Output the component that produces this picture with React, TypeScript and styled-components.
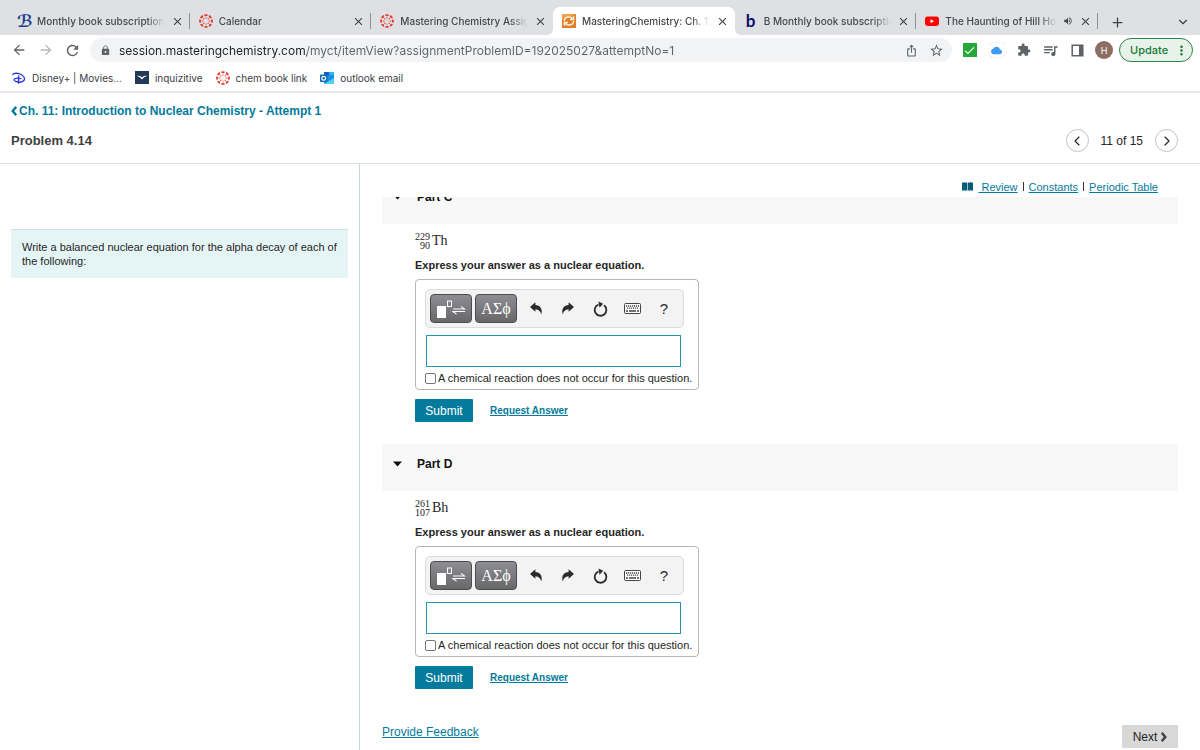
import React from "react";
import styled, { createGlobalStyle, css } from "styled-components";
import {
  MdArrowBack,
  MdArrowForward,
  MdCheck,
  MdClose,
  MdCloud,
  MdExtension,
  MdIosShare,
  MdLock,
  MdMoreVert,
  MdQueueMusic,
  MdRefresh,
  MdStarBorder,
  MdVolumeUp,
} from "react-icons/md";
import { ChevronDown, ChevronLeft, ChevronRight, Plus } from "lucide-react";

const UI_FONT = '"Inter", "Roboto", sans-serif';
const PAGE_FONT = '"Liberation Sans", Arial, sans-serif';
const MATH_FONT = '"Liberation Serif", "DejaVu Serif", serif';
const TEAL = "#047a9c";

const GlobalStyle = createGlobalStyle`
  *, *::before, *::after { box-sizing: border-box; }
  body { margin: 0; background: #fff; font-family: ${PAGE_FONT}; color: #252525; }
  button, input { font: inherit; color: inherit; }
  button { border: 0; padding: 0; background: none; cursor: pointer; }
  a { color: ${TEAL}; }
  svg { display: block; flex: none; }
  h1, h2, h3, p { margin: 0; }
`;

const Window = styled.div`
  display: flex;
  flex-direction: column;
  height: 100vh;
  overflow: hidden;
`;

/* ---------- browser chrome ---------- */

const TabStrip = styled.div`
  display: flex;
  align-items: flex-end;
  height: 35px;
  padding-left: 8px;
  background: #dee0e4;
  font-family: ${UI_FONT};
  flex: none;
`;

const Tab = styled.div<{ $active?: boolean; $divider?: boolean }>`
  position: relative;
  display: flex;
  flex: 1 1 0;
  align-items: center;
  gap: 6px;
  min-width: 0;
  height: 28px;
  padding: 0 7px 0 9px;
  font-size: 10px;
  font-weight: 500;
  color: #45484c;

  ${(p) =>
    p.$divider &&
    css`
      &::after {
        content: "";
        position: absolute;
        right: 0;
        top: 6px;
        width: 1px;
        height: 16px;
        background: #8d9094;
      }
    `}

  ${(p) =>
    p.$active &&
    css`
      background: #fff;
      border-radius: 7px 7px 0 0;
      &::before,
      &::after {
        content: "";
        position: absolute;
        bottom: 0;
        width: 6px;
        height: 6px;
      }
      &::before {
        right: 100%;
        background: radial-gradient(circle at 0 0, transparent 6px, #fff 6px);
      }
      &::after {
        left: 100%;
        background: radial-gradient(circle at 100% 0, transparent 6px, #fff 6px);
      }
    `}
`;

const TabTitle = styled.span`
  flex: 1;
  min-width: 0;
  overflow: hidden;
  white-space: nowrap;
  mask-image: linear-gradient(to right, #000 calc(100% - 18px), transparent);
`;

const TabClose = styled.button`
  display: grid;
  place-items: center;
  width: 12px;
  height: 12px;
  flex: none;
  color: #3c4043;
`;

const TabStripEnd = styled.div`
  display: flex;
  align-items: center;
  justify-content: space-between;
  width: 102px;
  height: 28px;
  padding: 0 12px;
  color: #3c4043;
  flex: none;
`;

const Glyph = styled.span<{ $color: string; $font: string }>`
  width: 14px;
  flex: none;
  font: bold 17px/20px ${(p) => p.$font};
  text-align: center;
  color: ${(p) => p.$color};
`;

const Toolbar = styled.div`
  display: flex;
  align-items: center;
  height: 30px;
  padding: 0 7px 0 10px;
  gap: 9px;
  color: #5f6368;
  font-family: ${UI_FONT};
  flex: none;
`;

const ToolGroup = styled.div`
  display: flex;
  align-items: center;
  gap: 10px;
`;

const ProfileGroup = styled.div`
  display: flex;
  align-items: center;
  gap: 6px;
`;

const ToolButton = styled.button<{ $faded?: boolean }>`
  display: grid;
  place-items: center;
  width: 17px;
  height: 20px;
  flex: none;
  color: ${(p) => (p.$faded ? "#b5b7ba" : "#5f6368")};
`;

const AddressBar = styled.div`
  display: flex;
  flex: 1;
  align-items: center;
  gap: 8px;
  height: 24px;
  padding: 0 7px 0 10px;
  border-radius: 12px;
  background: #f1f3f4;
`;

const AddressInput = styled.input`
  flex: 1;
  min-width: 0;
  padding: 0;
  border: 0;
  outline: 0;
  font-size: 12px;
  color: transparent;
  background: linear-gradient(to right, #202124 188px, #5f6368 188px);
  background-clip: text;
`;

const CheckBadge = styled.span`
  display: grid;
  place-items: center;
  width: 14px;
  height: 14px;
  color: #fff;
  background: #27a83a;
  stroke-width: 2px;
`;

const CloudBadge = styled.span`
  display: grid;
  place-items: center;
  width: 14px;
  height: 14px;
  border-radius: 2px;
  color: #3b9af5;
  background: #fff;
  box-shadow: 0 0 1px #aaa;
`;

const Avatar = styled.button`
  width: 18px;
  height: 18px;
  border-radius: 50%;
  background: #8d6e63;
  color: #fff;
  font-size: 9px;
  flex: none;
`;

const UpdateButton = styled.button`
  display: flex;
  align-items: center;
  justify-content: space-between;
  width: 74px;
  height: 24px;
  padding: 0 3px 0 10px;
  border: 1px solid #2a8549;
  border-radius: 12px;
  background: #e8f2ea;
  color: #1a7a38;
  font-size: 11px;
  font-weight: 500;
  flex: none;
`;

const Bookmarks = styled.nav`
  display: flex;
  align-items: center;
  gap: 13px;
  height: 28px;
  padding: 0 12px;
  border-bottom: 2px solid #e6e7e9;
  font-family: ${UI_FONT};
  flex: none;
`;

const Bookmark = styled.a`
  display: flex;
  align-items: center;
  gap: 6px;
  font-size: 10px;
  color: #3c4043;
  text-decoration: none;
  white-space: nowrap;
`;

/* ---------- assignment page ---------- */

const PageHeader = styled.header`
  display: flex;
  align-items: flex-end;
  justify-content: space-between;
  height: 71px;
  padding: 0 22px 11px 11px;
  border-bottom: 1px solid #dcdfe2;
  flex: none;
`;

const HeaderTitles = styled.div`
  display: flex;
  flex-direction: column;
  gap: 14px;
  padding-bottom: 3px;
`;

const BackLink = styled.a`
  display: flex;
  align-items: center;
  gap: 2px;
  font-size: 12px;
  line-height: 16px;
  font-weight: bold;
  text-decoration: none;
`;

const ProblemTitle = styled.h1`
  font-size: 13px;
  line-height: 16px;
  color: #404040;
`;

const Pager = styled.div`
  display: flex;
  align-items: center;
  gap: 12px;
  font-size: 12px;
`;

const PagerButton = styled.button`
  display: grid;
  place-items: center;
  width: 23px;
  height: 23px;
  border: 1px solid #c2c2c2;
  border-radius: 50%;
`;

const Columns = styled.div`
  display: flex;
  flex: 1;
  min-height: 0;
`;

const PromptColumn = styled.aside`
  width: 30%;
  padding: 65px 11px 0;
  border-right: 1px solid #c9d5de;
`;

const Prompt = styled.p`
  padding: 10px 11px;
  border-top: 1px solid #d5dfe0;
  background: #e5f5f6;
  font-size: 11px;
  line-height: 14px;
`;

const WorkColumn = styled.main`
  display: flex;
  flex-direction: column;
  flex: 1;
  min-width: 0;
  padding: 0 22px;
`;

const ResourceLinks = styled.nav`
  display: flex;
  align-items: center;
  justify-content: flex-end;
  gap: 5px;
  height: 33px;
  padding: 12px 20px 0 0;
  font-size: 11px;
  flex: none;
`;

const ResourceLink = styled.a`
  white-space: pre;
`;

const LinkDivider = styled.span`
  width: 1px;
  height: 9px;
  background: #333;
`;

const Scroller = styled.div`
  flex: 1;
  min-height: 0;
  overflow: hidden;
`;

const Scrolled = styled.div`
  margin-top: -20px;
`;

const PartHeader = styled.button`
  display: flex;
  align-items: center;
  gap: 15px;
  width: 100%;
  height: 47px;
  padding: 0 0 8px 11px;
  background: #f8f8f8;
  font-size: 12px;
  font-weight: bold;
  color: #111;
`;

const PartBody = styled.div`
  padding: 8px 0 22px 33px;
`;

const Nuclide = styled.div`
  display: flex;
  align-items: center;
  gap: 2px;
  height: 18px;
  font: 14px/18px ${MATH_FONT};
`;

const NuclideNumbers = styled.span`
  display: flex;
  flex-direction: column;
  font-size: 10px;
  line-height: 9px;
  text-align: right;
`;

const Instruction = styled.h3`
  padding: 7px 0 6px;
  font-size: 11px;
  line-height: 16px;
`;

const AnswerBox = styled.div`
  width: 284px;
  padding: 9px 9px 5px;
  border: 1px solid #b4b6b8;
  border-radius: 4px;
`;

const MathToolbar = styled.div`
  display: flex;
  align-items: center;
  width: 259px;
  height: 39px;
  padding: 0 3px 0 4px;
  border: 1px solid #dcdcdc;
  border-radius: 5px;
  background: #f3f3f3;
`;

const PaletteButton = styled.button`
  display: grid;
  place-items: center;
  width: 42px;
  height: 29px;
  margin-right: 3px;
  border: 1px solid #4b4b4d;
  border-radius: 4px;
  background: linear-gradient(#8e8d94, #68686a);
  color: #fff;
  font: 16px/20px ${MATH_FONT};
  flex: none;
`;

const MathTool = styled.button`
  display: grid;
  place-items: center;
  flex: 1;
  height: 29px;
  font-size: 15px;
  color: #2b2b2b;
`;

const EquationInput = styled.input`
  display: block;
  width: 255px;
  height: 32px;
  margin: 7px 0 5px 1px;
  border: 1px solid #2595b5;
  background: #fff;
`;

const NoReaction = styled.label`
  display: flex;
  align-items: center;
  gap: 2px;
  height: 12px;
  font-size: 11px;
  white-space: nowrap;
`;

const Tick = styled.input`
  appearance: none;
  flex: none;
  width: 11px;
  height: 11px;
  margin: 0;
  border: 1px solid #767676;
  border-radius: 2px;
  background: #fff;
  &:checked {
    background: ${TEAL};
  }
`;

const Actions = styled.div`
  display: flex;
  align-items: center;
  gap: 17px;
  padding-top: 9px;
`;

const Submit = styled.button`
  width: 58px;
  height: 23px;
  border-radius: 1px;
  background: ${TEAL};
  color: #fff;
  font-size: 12px;
`;

const RequestAnswer = styled.a`
  font-size: 10px;
  font-weight: bold;
`;

const Footer = styled.footer`
  display: flex;
  align-items: flex-start;
  justify-content: space-between;
  padding-top: 14px;
  font-size: 12px;
`;

const NextButton = styled.button`
  display: flex;
  align-items: center;
  justify-content: center;
  gap: 4px;
  width: 56px;
  height: 23px;
  border-radius: 1px;
  background: #d8d8d8;
  font-size: 12px;
`;

/* ---------- drawings ---------- */

const CanvasLogo = () => (
  <svg width="14" height="14" viewBox="0 0 28 28" aria-hidden="true">
    {[0, 45, 90, 135, 180, 225, 270, 315].map((a) => (
      <g key={a} transform={`rotate(${a} 14 14)`} fill="#e63c2f">
        <path d="M10.300 .8a13.600 13.600 0 0 1 7.400 0a3.700 3.900 0 0 1-7.400 0z" />
        <circle cx="14" cy="7.800" r="1.300" />
      </g>
    ))}
  </svg>
);

const MasteringLogo = () => (
  <svg width="14" height="14" viewBox="0 0 14 14" aria-hidden="true">
    <rect width="14" height="14" fill="#e0802c" />
    <path d="M0 0h14L0 6z" fill="#f0a048" />
    <g fill="none" stroke="#fff3dc" strokeWidth="1.500">
      <path d="M2.300 7C2.500 4.500 4.500 3 7 3c1.600 0 2.700.6 3.600 1.800M11.700 7C11.500 9.500 9.500 11 7 11c-1.600 0-2.700-.6-3.600-1.800" />
      <path d="M11.500 2.300v3.200H8M2.500 11.700V8.500H6" />
    </g>
  </svg>
);

const YouTubeLogo = () => (
  <svg width="14" height="14" viewBox="0 0 14 14" aria-hidden="true">
    <rect y="2.500" width="14" height="9.500" rx="2.400" fill="#f00" />
    <path d="M5.500 5.200v4L9 7.200z" fill="#fff" />
  </svg>
);

const DisneyLogo = () => (
  <svg width="14" height="14" viewBox="0 0 14 14" fill="none" stroke="#2d35dd" strokeLinecap="round" aria-hidden="true">
    <path d="M.8 3.600C1.400 2 6 1.600 9.500 3.700c3.600 2.200 4 5.300 1.200 6.700-1.500.8-4 .9-5.200.3" strokeWidth="1.300" />
    <path d="M6.600 5v7" strokeWidth="1.400" />
    <path d="M8.800 7.700C6 6.800 1.700 7.200 2 8.900c.2 1.200 2.800 2 4.300 1.900" strokeWidth="1.200" />
  </svg>
);

const InquizitiveLogo = () => (
  <svg width="14" height="14" viewBox="0 0 14 14" aria-hidden="true">
    <rect width="14" height="13" fill="#233a56" />
    <path d="M2 4.800c2 0 3.500.3 5 1.700 1.500-1.400 3-1.700 5-1.700-1.500 1.300-3 1.500-3.600 2.300L7 8.400 5.600 7.100C5 6.300 3.500 6.100 2 4.800z" fill="#fff" />
  </svg>
);

const OutlookLogo = () => (
  <svg width="14" height="14" viewBox="0 0 14 14" aria-hidden="true">
    <rect x="4" y="1" width="10" height="12" rx="1" fill="#1490df" />
    <path d="M4 1h5v3H4z" fill="#0f5fb0" />
    <path d="M9 1h5v3H9z" fill="#33b4f0" />
    <path d="M4 13l10-6v6z" fill="#50d0f5" />
    <rect y="3.500" width="7.500" height="7.500" rx=".8" fill="#0f6cbd" />
    <circle cx="3.700" cy="7.200" r="1.900" fill="none" stroke="#fff" strokeWidth="1.200" />
  </svg>
);

const SidePanelIcon = () => (
  <svg width="13" height="13" viewBox="0 0 13 13" aria-hidden="true">
    <path d="M1.200 1.200h10.600v10.600H1.200z" fill="none" stroke="#5f6368" strokeWidth="1.500" />
    <path d="M8 1.200h4v10.600H8z" fill="#5f6368" />
  </svg>
);

const BookIcon = () => (
  <svg width="11" height="9" viewBox="0 0 11 9" fill="#045c77" aria-hidden="true">
    <path d="M0 .7q2.600-.8 5.200 0v8q-2.600-.8-5.200 0zM5.800 .7q2.600-.8 5.200 0v8q-2.600-.8-5.200 0z" />
  </svg>
);

const BoldChevron = ({ left, color }: { left?: boolean; color: string }) => (
  <svg width="6" height="10" viewBox="0 0 6 10" fill="none" stroke={color} strokeWidth="2.400" aria-hidden="true">
    <path d={left ? "M5.200 .9L1.700 5L5.200 9.100" : "M.8 .9L4.300 5L.8 9.100"} />
  </svg>
);

const Caret = () => (
  <svg width="9" height="6" viewBox="0 0 9 6" aria-hidden="true">
    <path d="M0 .4h9L4.500 5.600z" fill="#111" />
  </svg>
);

const TemplateIcon = () => (
  <svg width="30" height="20" viewBox="0 0 30 20" aria-hidden="true">
    <rect x="1" y="7" width="9" height="12" fill="#fff" />
    <rect x="11.500" y="2" width="4" height="5.500" fill="none" stroke="#fff" />
    <path d="M17 10h11.500l-3.500-2.600M29 12.500H17l3.500 2.600" fill="none" stroke="#fff" strokeWidth="1.100" />
  </svg>
);

const BentArrow = ({ flip }: { flip?: boolean }) => (
  <svg width="12" height="13" viewBox="0 0 12 13" aria-hidden="true">
    <path
      d="M0 4.900L5.400 .2V2.900C10 3.100 13 6.600 11.200 12.600C10.400 9.200 8.800 7.500 5.400 7.300V9.700Z"
      fill="#2b2b2b"
      transform={flip ? "matrix(-1 0 0 1 12 0)" : undefined}
    />
  </svg>
);

const ResetIcon = () => (
  <svg width="15" height="16" viewBox="0 0 15 16" aria-hidden="true">
    <path d="M5.600 3.500A5.800 5.800 0 1 0 11 4.300" fill="none" stroke="#2b2b2b" strokeWidth="1.800" />
    <path d="M5.500.4l4.700 2.400-3.700 4z" fill="#2b2b2b" />
  </svg>
);

const KeyboardIcon = () => (
  <svg width="17" height="11" viewBox="0 0 17 11" aria-hidden="true">
    <rect x=".5" y=".5" width="16" height="10" rx="1" fill="#fff" stroke="#444" />
    <path d="M2 3h13M3 5.200h12" stroke="#444" strokeWidth="1.300" strokeDasharray="1.200 .8" />
    <path d="M2 8h2M5 8h7M13 8h2" stroke="#444" strokeWidth="1.300" />
  </svg>
);

/* ---------- content ---------- */

type TabInfo = {
  title: string;
  icon: React.ReactNode;
  active?: boolean;
  divider?: boolean;
  sound?: boolean;
};

const tabs: TabInfo[] = [
  {
    title: "Monthly book subscription",
    icon: <Glyph $color="#1f3f8f" $font='"DejaVu Serif", "DejaVu Sans", serif'>ℬ</Glyph>,
    divider: true,
  },
  { title: "Calendar", icon: <CanvasLogo />, divider: true },
  { title: "Mastering Chemistry Assign", icon: <CanvasLogo /> },
  { title: "MasteringChemistry: Ch. 11", icon: <MasteringLogo />, active: true },
  {
    title: "B Monthly book subscriptio",
    icon: <Glyph $color="#0c0c6c" $font='"Lato", sans-serif'>b</Glyph>,
    divider: true,
  },
  { title: "The Haunting of Hill Ho", icon: <YouTubeLogo />, divider: true, sound: true },
];

const bookmarks = [
  { label: "Disney+ | Movies...", icon: <DisneyLogo /> },
  { label: "inquizitive", icon: <InquizitiveLogo /> },
  { label: "chem book link", icon: <CanvasLogo /> },
  { label: "outlook email", icon: <OutlookLogo /> },
];

const parts = [
  { name: "Part C", mass: "229", atomic: "90", symbol: "Th" },
  { name: "Part D", mass: "261", atomic: "107", symbol: "Bh" },
];

const Part = ({ name, mass, atomic, symbol }: (typeof parts)[number]) => (
  <section>
    <PartHeader type="button" aria-expanded="true">
      <Caret />
      {name}
    </PartHeader>
    <PartBody>
      <Nuclide>
        <NuclideNumbers>
          <span>{mass}</span>
          <span>{atomic}</span>
        </NuclideNumbers>
        {symbol}
      </Nuclide>
      <Instruction>Express your answer as a nuclear equation.</Instruction>
      <AnswerBox>
        <MathToolbar>
          <PaletteButton type="button" aria-label="Templates">
            <TemplateIcon />
          </PaletteButton>
          <PaletteButton type="button">ΑΣϕ</PaletteButton>
          <MathTool type="button" aria-label="Undo">
            <BentArrow />
          </MathTool>
          <MathTool type="button" aria-label="Redo">
            <BentArrow flip />
          </MathTool>
          <MathTool type="button" aria-label="Reset">
            <ResetIcon />
          </MathTool>
          <MathTool type="button" aria-label="Keyboard shortcuts">
            <KeyboardIcon />
          </MathTool>
          <MathTool type="button">?</MathTool>
        </MathToolbar>
        <EquationInput type="text" aria-label={`${name} answer`} />
        <NoReaction>
          <Tick type="checkbox" />
          A chemical reaction does not occur for this question.
        </NoReaction>
      </AnswerBox>
      <Actions>
        <Submit type="button">Submit</Submit>
        <RequestAnswer href="#request">Request Answer</RequestAnswer>
      </Actions>
    </PartBody>
  </section>
);

export default function App() {
  return (
    <Window>
      <GlobalStyle />
      <TabStrip>
        {tabs.map((t) => (
          <Tab key={t.title} $active={t.active} $divider={t.divider}>
            {t.icon}
            <TabTitle>{t.title}</TabTitle>
            {t.sound && <MdVolumeUp size={10} />}
            <TabClose type="button" aria-label="Close tab">
              <MdClose size={13} />
            </TabClose>
          </Tab>
        ))}
        <TabStripEnd>
          <TabClose type="button" aria-label="New tab">
            <Plus size={15} />
          </TabClose>
          <TabClose type="button" aria-label="Search tabs">
            <ChevronDown size={14} />
          </TabClose>
        </TabStripEnd>
      </TabStrip>

      <Toolbar>
        <ToolGroup>
          <ToolButton type="button" aria-label="Back">
            <MdArrowBack size={16} />
          </ToolButton>
          <ToolButton type="button" aria-label="Forward" $faded>
            <MdArrowForward size={16} />
          </ToolButton>
          <ToolButton type="button" aria-label="Reload">
            <MdRefresh size={17} />
          </ToolButton>
        </ToolGroup>
        <AddressBar>
          <MdLock size={11} />
          <AddressInput
            type="text"
            aria-label="Address"
            defaultValue="session.masteringchemistry.com/myct/itemView?assignmentProblemID=192025027&attemptNo=1"
          />
          <ToolButton type="button" aria-label="Share">
            <MdIosShare size={13} />
          </ToolButton>
          <ToolButton type="button" aria-label="Bookmark this page">
            <MdStarBorder size={15} />
          </ToolButton>
        </AddressBar>
        <ToolGroup>
          <ToolButton type="button" aria-label="Checker">
            <CheckBadge>
              <MdCheck size={13} stroke="#fff" />
            </CheckBadge>
          </ToolButton>
          <ToolButton type="button" aria-label="Cloud bookmarks">
            <CloudBadge>
              <MdCloud size={11} />
            </CloudBadge>
          </ToolButton>
          <ToolButton type="button" aria-label="Extensions">
            <MdExtension size={14} />
          </ToolButton>
          <ToolButton type="button" aria-label="Media controls">
            <MdQueueMusic size={17} />
          </ToolButton>
          <ToolButton type="button" aria-label="Side panel">
            <SidePanelIcon />
          </ToolButton>
        </ToolGroup>
        <ProfileGroup>
          <Avatar type="button">H</Avatar>
          <UpdateButton type="button">
            Update
            <MdMoreVert size={15} />
          </UpdateButton>
        </ProfileGroup>
      </Toolbar>

      <Bookmarks>
        {bookmarks.map((b) => (
          <Bookmark key={b.label} href="#bookmark">
            {b.icon}
            {b.label}
          </Bookmark>
        ))}
      </Bookmarks>

      <PageHeader>
        <HeaderTitles>
          <BackLink href="#assignment">
            <BoldChevron left color={TEAL} />
            Ch. 11: Introduction to Nuclear Chemistry - Attempt 1
          </BackLink>
          <ProblemTitle>Problem 4.14</ProblemTitle>
        </HeaderTitles>
        <Pager>
          <PagerButton type="button" aria-label="Previous problem">
            <ChevronLeft size={16} strokeWidth={1.75} />
          </PagerButton>
          11 of 15
          <PagerButton type="button" aria-label="Next problem">
            <ChevronRight size={16} strokeWidth={1.75} />
          </PagerButton>
        </Pager>
      </PageHeader>

      <Columns>
        <PromptColumn>
          <Prompt>Write a balanced nuclear equation for the alpha decay of each of the following:</Prompt>
        </PromptColumn>
        <WorkColumn>
          <ResourceLinks>
            <BookIcon />
            <ResourceLink href="#review"> Review</ResourceLink>
            <LinkDivider />
            <ResourceLink href="#constants">Constants</ResourceLink>
            <LinkDivider />
            <ResourceLink href="#table">Periodic Table</ResourceLink>
          </ResourceLinks>
          <Scroller>
            <Scrolled>
              {parts.map((p) => (
                <Part key={p.name} {...p} />
              ))}
              <Footer>
                <a href="#feedback">Provide Feedback</a>
                <NextButton type="button">
                  Next
                  <BoldChevron color="#404040" />
                </NextButton>
              </Footer>
            </Scrolled>
          </Scroller>
        </WorkColumn>
      </Columns>
    </Window>
  );
}
